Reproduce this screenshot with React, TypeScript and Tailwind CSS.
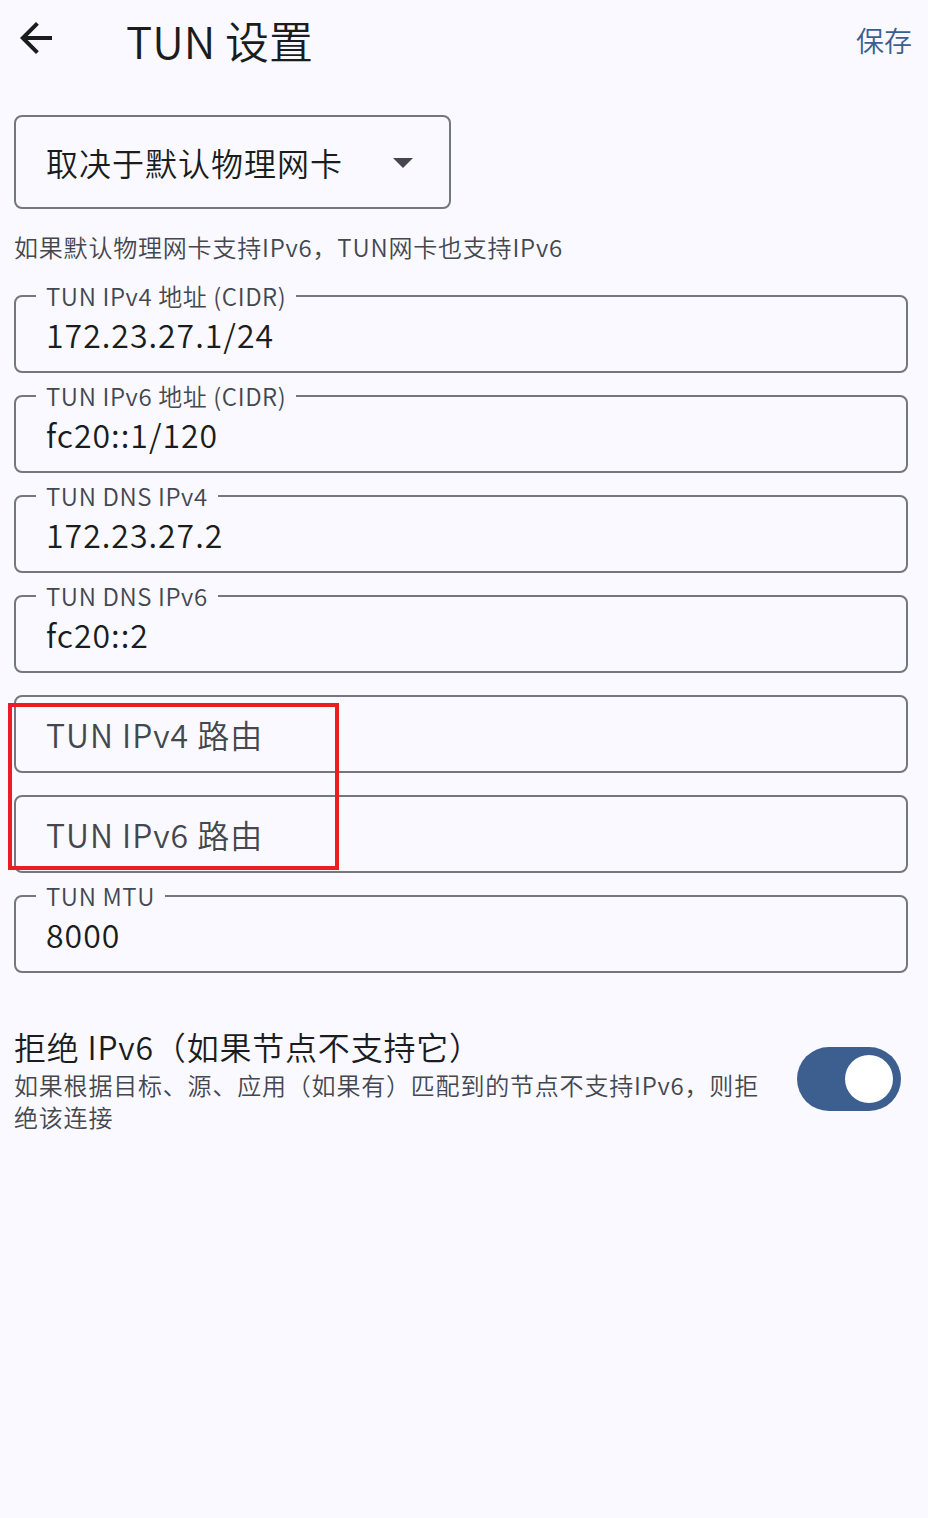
import React from "react";

const font = {
  fontFamily: '"Noto Sans CJK SC", "Noto Sans", sans-serif',
};

function BackArrow() {
  return (
    <svg viewBox="0 0 24 24" className="size-12 fill-[#1a1c1e]">
      <path d="M20 11H7.83l5.59-5.59L12 4l-8 8 8 8 1.41-1.41L7.83 13H20v-2z" />
    </svg>
  );
}

function DropArrow() {
  return (
    <svg viewBox="0 0 24 24" className="size-12 fill-[#44474e]">
      <path d="M7 10l5 5 5-5z" />
    </svg>
  );
}

type FieldProps = {
  label?: string;
  value?: string;
  placeholder?: string;
};

function OutlinedField({ label, value, placeholder }: FieldProps) {
  return (
    <div className="relative h-[78px] rounded-lg border-2 border-[#74777f]">
      {label && (
        <span className="absolute -top-[15px] left-[20px] bg-[#f9f9ff] px-[10px] text-[24px] leading-[28px] tracking-[0.6px] text-[#44474e]">
          {label}
        </span>
      )}
      <div className="flex h-full items-center pl-[30px] text-[32px] leading-[40px] tracking-[1px]">
        {value ? (
          <span className="text-[#1a1c1e]">{value}</span>
        ) : (
          <span className="text-[#44474e]">{placeholder}</span>
        )}
      </div>
    </div>
  );
}

export default function App() {
  return (
    <div style={font} className="relative min-h-[1518px] w-full bg-[#f9f9ff] font-[350]">
      {/* top bar */}
      <header className="flex h-[80px] items-center pl-3 pr-4">
        <button className="-mt-1">
          <BackArrow />
        </button>
        <span className="ml-[66px] text-[44px] leading-[52px] text-[#1a1c1e]">
          TUN 设置
        </span>
        <button className="ml-auto text-[28px] leading-[36px] text-[#3d5f90]">
          保存
        </button>
      </header>

      <main className="pl-[14px] pr-[20px]">
        <div className="mt-[35px] inline-flex h-[94px] items-center rounded-lg border-2 border-[#74777f] pl-[30px] pr-[22px]">
          <span className="text-[32px] leading-[40px] tracking-[1px] text-[#1a1c1e]">
            取决于默认物理网卡
          </span>
          <span className="ml-[36px]">
            <DropArrow />
          </span>
        </div>

        <p className="mt-[22px] text-[24px] leading-[32px] tracking-[0.8px] text-[#44474e]">
          如果默认物理网卡支持IPv6，TUN网卡也支持IPv6
        </p>

        <div className="mt-[32px] flex flex-col gap-[22px]">
          <OutlinedField label="TUN IPv4 地址 (CIDR)" value="172.23.27.1/24" />
          <OutlinedField label="TUN IPv6 地址 (CIDR)" value="fc20::1/120" />
          <OutlinedField label="TUN DNS IPv4" value="172.23.27.2" />
          <OutlinedField label="TUN DNS IPv6" value="fc20::2" />
          <OutlinedField placeholder="TUN IPv4 路由" />
          <OutlinedField placeholder="TUN IPv6 路由" />
          <OutlinedField label="TUN MTU" value="8000" />
        </div>

        <div className="mt-[51px] flex items-center">
          <div className="mr-[24px] flex-1">
            <div className="text-[32px] leading-[44px] tracking-[0.8px] text-[#1a1c1e]">
              拒绝 IPv6（如果节点不支持它）
            </div>
            <div className="mt-[1px] text-[24px] leading-[32px] tracking-[0.8px] text-[#44474e]">
              如果根据目标、源、应用（如果有）匹配到的节点不支持IPv6，则拒绝该连接
            </div>
          </div>
          <div className="mr-[7px] flex h-[64px] w-[104px] shrink-0 items-center justify-end rounded-full bg-[#3d5f90] pr-[8px]">
            <div className="size-12 rounded-full bg-white" />
          </div>
        </div>
      </main>

      {/* red highlight box */}
      <div className="absolute left-[8px] top-[703px] h-[167px] w-[331px] border-4 border-[#ec1c24]" />
    </div>
  );
}
